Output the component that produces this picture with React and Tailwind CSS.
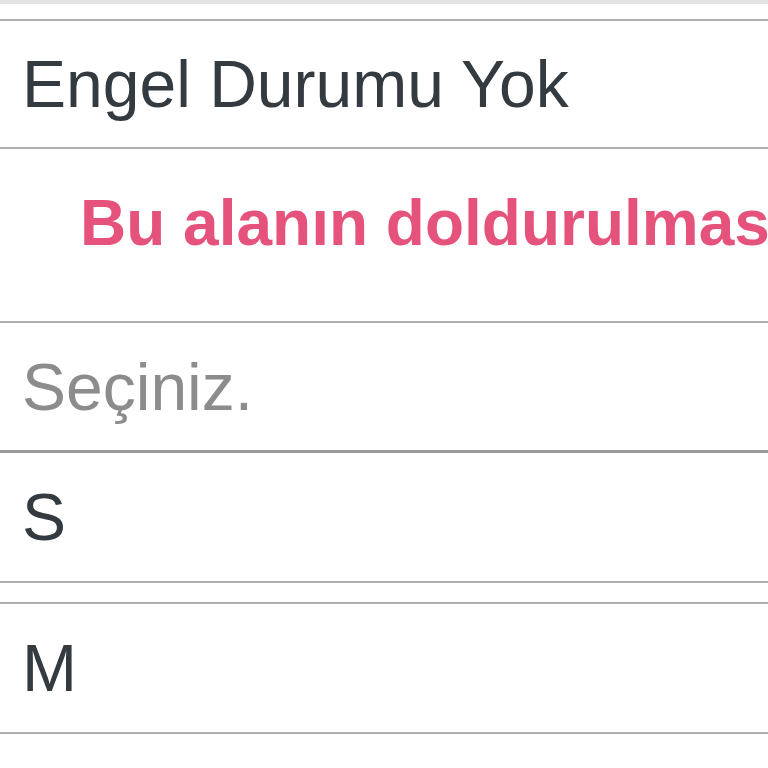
const rowText = "text-[66px] leading-none text-[#333a40]";

export default function App() {
  return (
    <div className="w-[768px] h-[768px] overflow-hidden bg-white font-['Liberation_Sans',Arial,sans-serif]">
      <div className="h-[4px] bg-[#e3e3e3]" />
      <div className="h-[15px]" />

      {/* input with value */}
      <div className="h-[130px] border-y-2 border-[#b0b0b0] flex items-center px-[22px]">
        <span className={rowText}>Engel Durumu Yok</span>
      </div>

      {/* validation message */}
      <div className="h-[172px] pl-[80px] pt-[42px] overflow-hidden">
        <p className="text-[64px] leading-none font-bold text-[#e5537c] whitespace-nowrap">
          Bu alanın doldurulması zorunludur.
        </p>
      </div>

      {/* select */}
      <div className="h-[132px] border-t-2 border-b-[3px] border-t-[#b0b0b0] border-b-[#9a9a9a] flex items-center px-[22px]">
        <span className="text-[66px] leading-none text-[#8c8c8c]">Seçiniz.</span>
      </div>
      <div className="h-[130px] border-b-2 border-[#b0b0b0] flex items-center px-[22px]">
        <span className={rowText}>S</span>
      </div>

      <div className="h-[19px]" />

      <div className="h-[132px] border-y-2 border-[#b0b0b0] flex items-center px-[22px]">
        <span className={rowText}>M</span>
      </div>
    </div>
  );
}
